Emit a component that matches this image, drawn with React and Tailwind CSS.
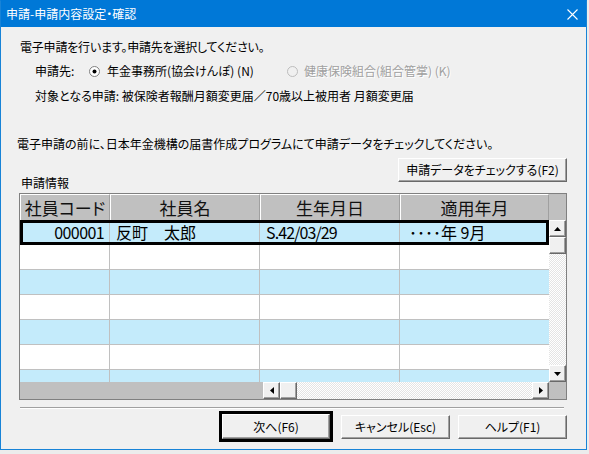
import React from 'react';

const font = "font-['Noto_Sans_CJK_JP',sans-serif] [font-feature-settings:'palt']";

const btn =
  'bg-[#f0f0f0] border border-t-white border-l-white border-r-[#696969] border-b-[#696969] shadow-[inset_-1px_-1px_0_#a0a0a0] flex items-center justify-center text-[12px] leading-none text-black';

const track =
  'bg-[image:repeating-conic-gradient(#ffffff_0%_25%,#e4e4e4_0%_50%)] bg-[length:2px_2px]';

const columns = [
  { label: '社員コード', w: 'w-[90px]' },
  { label: '社員名', w: 'w-[150px]' },
  { label: '生年月日', w: 'w-[140px]' },
  { label: '適用年月', w: 'w-[149px]' },
];

const rows = [
  { code: '000001', name: '反町　太郎', birth: 'S.42/03/29', month: '････年 9月', selected: true },
  {},
  {},
  {},
  {},
  {},
  {},
];

const Arrow = ({ dir }) => {
  if (dir === 'up')
    return (
      <svg width="7" height="4" viewBox="0 0 7 4">
        <polygon points="3.5,0 7,4 0,4" fill="#000" />
      </svg>
    );
  if (dir === 'down')
    return (
      <svg width="7" height="4" viewBox="0 0 7 4">
        <polygon points="0,0 7,0 3.5,4" fill="#000" />
      </svg>
    );
  if (dir === 'left')
    return (
      <svg width="4" height="7" viewBox="0 0 4 7">
        <polygon points="4,0 4,7 0,3.5" fill="#000" />
      </svg>
    );
  return (
    <svg width="4" height="7" viewBox="0 0 4 7">
      <polygon points="0,0 4,3.5 0,7" fill="#000" />
    </svg>
  );
};

const ScrollBtn = ({ dir }) => (
  <div className={`w-[17px] h-[17px] shrink-0 ${btn}`}>{dir && <Arrow dir={dir} />}</div>
);

const Radio = ({ checked, disabled }) => (
  <svg width="11" height="11" viewBox="0 0 11 11" className="shrink-0">
    <circle cx="5.5" cy="5.5" r="5" fill={disabled ? '#f0f0f0' : '#fff'} stroke={disabled ? '#bcbcbc' : '#808080'} />
    {checked && <circle cx="5.5" cy="5.5" r="2" fill="#000" />}
  </svg>
);

const Grid = () => (
  <div className="mt-[2px] ml-[18px] mr-[19px] h-[207px] border border-[#808080] bg-[#c0c0c0] flex flex-col">
    <div className="flex h-[26px] shrink-0">
      {columns.map((c) => (
        <div
          key={c.label}
          className={`${c.w} shrink-0 border-t border-l border-r border-t-white border-l-white border-r-[#a0a0a0] flex items-center justify-center text-[17px] leading-none text-[#111]`}
        >
          {c.label}
        </div>
      ))}
      <div className="flex-1" />
    </div>
    <div className="flex h-[162px] shrink-0">
      <div className="w-[529px] overflow-hidden bg-white">
        {rows.map((r, i) => (
          <div
            key={i}
            className={`flex h-[25px] border-b border-[#c0c0c0] text-[16px] leading-none text-black ${
              i % 2 === 0 ? 'bg-[#c4ebfb]' : 'bg-white'
            } ${r.selected ? 'outline-3 outline-black -outline-offset-3' : ''}`}
          >
            <div className="w-[90px] shrink-0 border-r border-[#c0c0c0] flex items-center justify-end pr-[5px] tracking-[-0.6px]">
              {r.code}
            </div>
            <div className="w-[150px] shrink-0 border-r border-[#c0c0c0] flex items-center pl-[6px]">{r.name}</div>
            <div className="w-[140px] shrink-0 border-r border-[#c0c0c0] flex items-center pl-[6px] tracking-[-0.9px]">
              {r.birth}
            </div>
            <div className="w-[149px] shrink-0 flex items-center pl-[9px]">{r.month}</div>
          </div>
        ))}
      </div>
      <div className="w-[17px] flex flex-col">
        <ScrollBtn dir="up" />
        <ScrollBtn />
        <div className={`flex-1 ${track}`} />
        <ScrollBtn dir="down" />
      </div>
    </div>
    <div className="flex h-[17px] shrink-0">
      <div className="w-[243px] shrink-0" />
      <ScrollBtn dir="left" />
      <ScrollBtn />
      <div className={`flex-1 ${track}`} />
      <ScrollBtn dir="right" />
      <div className="w-[17px] shrink-0" />
    </div>
  </div>
);

const App = () => {
  return (
    <div className={`w-[589px] h-[454px] bg-[#ececec] ${font}`}>
      <div className="w-[587px] h-[450px] border border-[#1883d7] border-t-[#0078d7] bg-[#f0f0f0] flex flex-col">
        <div className="h-[26px] shrink-0 bg-[#0078d7] flex items-center pl-[5px] text-white text-[12px] leading-none">
          <span>申請-申請内容設定・確認</span>
          <svg width="11" height="11" viewBox="0 0 11 11" className="ml-auto mr-[8px]">
            <path d="M0.5 0.5L10.5 10.5M10.5 0.5L0.5 10.5" stroke="#fff" strokeWidth="1.1" />
          </svg>
        </div>

        <div className="flex-1 flex flex-col pt-[12px] text-[12px] leading-[16px] text-black">
          <div className="pl-[19px] h-[16px] tracking-[-0.2px]">電子申請を行います。申請先を選択してください。</div>

          <div className="mt-[8px] pl-[34px] h-[16px] flex items-center">
            <span className="w-[54px] shrink-0">申請先:</span>
            <div className="w-[198px] shrink-0 flex items-center gap-[7px]">
              <Radio checked />
              <span>年金事務所(協会けんぽ) (N)</span>
            </div>
            <div className="flex items-center gap-[6px]">
              <Radio disabled />
              <span className="text-[#a0a0a0] [text-shadow:1px_1px_0_#fff]">健康保険組合(組合管掌) (K)</span>
            </div>
          </div>

          <div className="mt-[9px] pl-[34px] h-[16px]">
            対象となる申請: 被保険者報酬月額変更届／70歳以上被用者 月額変更届
          </div>

          <div className="mt-[32px] pl-[16px] h-[16px]">
            電子申請の前に、日本年金機構の届書作成プログラムにて申請データをチェックしてください。
          </div>

          <div className="mt-[6px] pl-[20px] mr-[19px] flex justify-between items-start">
            <span className="pt-[17px]">申請情報</span>
            <button className={`w-[169px] h-[24px] ${btn}`}>申請データをチェックする(F2)</button>
          </div>

          <Grid />

          <div className="mt-[7px] ml-[19px] mr-[22px] h-[2px] border-t border-b border-t-[#a0a0a0] border-b-white" />

          <div className="mt-[2px] mr-[19px] h-[31px] flex justify-end items-center gap-[8px]">
            <div className="w-[114px] h-[31px] border-[3px] border-black">
              <button className={`w-full h-full ${btn}`}>次へ(F6)</button>
            </div>
            <button className={`w-[109px] h-[24px] ${btn}`}>キャンセル(Esc)</button>
            <button className={`w-[109px] h-[24px] ${btn}`}>ヘルプ(F1)</button>
          </div>
        </div>
      </div>
    </div>
  );
};

export default App;
